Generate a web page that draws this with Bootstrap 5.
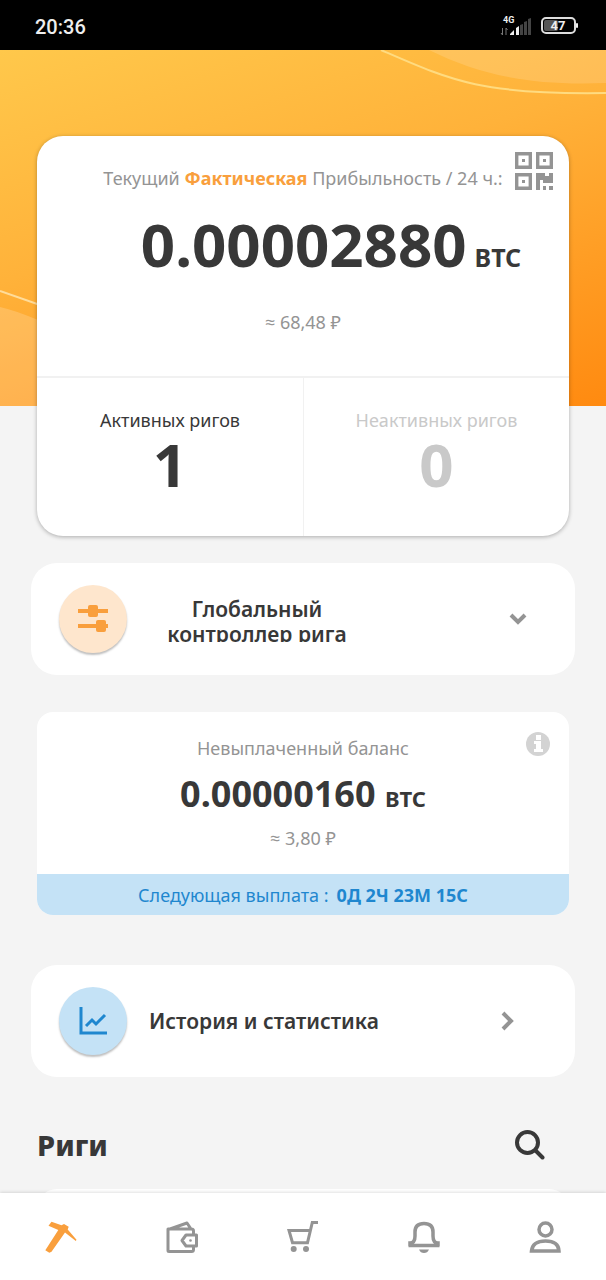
<!DOCTYPE html>
<html lang="ru">
<head>
<meta charset="utf-8">
<meta name="viewport" content="width=device-width, initial-scale=1">
<title>Риги</title>
<link href="https://cdn.jsdelivr.net/npm/bootstrap@5.3.0/dist/css/bootstrap.min.css" rel="stylesheet">
<style>
:root{--ink:#383838;--muted:#949494;--faint:#c9c9c9;--accent:#f99f3d;--blue:#1f87cf;--line:#f1f1f1}
body{font-family:"Noto Sans","Open Sans",sans-serif;background:#f4f4f4;color:var(--ink);font-size:18px;line-height:24px}
svg{display:block;flex:none}
.status{height:50px;background:#000;color:#eee;font:500 20px/24px Roboto,sans-serif;padding:4px 27px 0 35px}
.status svg text{font-family:Roboto,sans-serif;font-weight:700}
.hero{background:linear-gradient(162deg,#ffc84b 0%,#ffb23a 42%,#ff8a10 100%);padding:86px 37px 0}
.hero-art{inset:0}
.profit{border-radius:26px;margin-bottom:-130px;box-shadow:0 1px 4px rgba(0,0,0,.3)}
.profit-top{height:240px;padding-top:30px}
.qr{top:16px;right:16px}
.text-soft{color:var(--muted)}
.text-faint{color:var(--faint)}
.text-accent{color:var(--accent)}
.amount{font-size:60px;line-height:64px;margin-top:22px;padding-left:56px}
.unit{font-size:22px}
.amount .unit{font-size:25px;margin-left:8px}
.rate{margin-top:21px}
.rigs{border-top:2px solid var(--line)}
.rigs>div{height:158px;padding-top:30px}
.rigs>div+div{border-left:1px solid var(--line)}
.count{font-size:60px;line-height:64px;font-weight:700}
.rows{padding:157px 31px 0}
.row-card{width:100%;height:112px;border:0;border-radius:26px;background:#fff;padding:0 48px 0 28px;color:var(--ink);font-size:21px;line-height:25px;font-weight:600;text-decoration:none}
.disc{width:68px;height:68px;background:#c4e2f6;box-shadow:0 2px 2px rgba(0,0,0,.25)}
.disc-warm{background:#fee6cd}
.row-label{margin-left:22px}
.clip-label{width:216px;height:45px;overflow:hidden;text-align:center}
.gap-block{margin:37px 6px 50px}
.balance{border-radius:16px;overflow:hidden}
.balance-body{height:162px;padding-top:24px}
.balance-sum{font-size:36px;line-height:40px;margin-top:14px}
.info{top:20px;right:19px}
.payout{height:41px;background:#c4e2f6;color:var(--blue)}
.section-head{padding:0 30px 0 6px;margin-top:48px}
.section-head h1{font-size:29px;line-height:40px;font-weight:800}
.rig-list{border-radius:20px;margin:24px 6px -56px;min-height:60px}
.tabs{height:88px;background:#fff;box-shadow:0 -1px 3px rgba(0,0,0,.12);color:var(--muted)}
.tabs a{color:inherit}
.tabs a.active{color:var(--accent)}
</style>
</head>
<body class="d-flex flex-column min-vh-100">
<header class="status d-flex align-items-center justify-content-between">
  <span>20:36</span>
  <svg width="79" height="24" viewBox="0 0 79 24" fill="#eee" role="img" aria-label="4G, 47%">
    <text x="3" y="8" font-size="9">4G</text>
    <path d="M2.500 13v7M1 18l1.500 2M6 13v7M6 13l1.500 2" stroke="#777" fill="none"/>
    <path d="M10 20v-1l4-4v5zM16 20v-7l3-2v9z"/>
    <path d="M20 20v-10l3-1v11zM24 20V7l3-1v14zM28 20V4l3-1v17z" fill="#444"/>
    <rect x="42" y="3" width="33" height="15" rx="4" fill="none" stroke="#ddd" stroke-width="2"/>
    <rect x="44" y="5" width="14" height="11" rx="2" fill="#555"/>
    <rect x="76" y="8" width="2" height="5" rx="1"/>
    <text x="58" y="15" font-size="13" text-anchor="middle">47</text>
  </svg>
</header>

<main class="flex-grow-1 d-flex flex-column overflow-hidden">
  <section class="hero position-relative d-flex flex-column">
    <svg class="hero-art position-absolute w-100 h-100" viewBox="0 0 606 356" preserveAspectRatio="none" aria-hidden="true">
      <path d="M429 0C480 25 530 36 606 33V0z" fill="#fff" fill-opacity=".14"/>
      <path d="M381 0C450 30 480 45 606 43" fill="none" stroke="#ffdb80" stroke-width="2"/>
      <path d="M0 241L60 262" stroke="#ffdc9a" stroke-width="2"/>
      <path d="M0 257Q30 264 80 290V356H0z" fill="#fff" fill-opacity=".18"/>
    </svg>
    <div class="profit card border-0">
      <div class="profit-top text-center position-relative">
        <div class="text-soft">Текущий <b class="text-accent">Фактическая</b> Прибыльность / 24 ч.:</div>
        <div class="amount fw-bold">0.00002880<span class="unit">BTC</span></div>
        <div class="rate text-soft">≈ 68,48 ₽</div>
        <a class="qr position-absolute text-soft" href="#" aria-label="QR-код">
          <svg width="38" height="38" viewBox="0 0 38 38" fill="none" stroke="currentColor" stroke-width="3.400">
            <path d="M1.700 1.700h13.600v13.600H1.700zM22.700 1.700h13.600v13.600H22.700zM1.700 22.700h13.600v13.600H1.700z"/>
            <path stroke="none" fill="currentColor" d="M7 7h3v3H7zM28 7h3v3h-3zM7 28h3v3H7zM21 21h9v3h4v-3h4v10H28v-3h-3v10h-4zM28 34h3v4h-3zM34 34h4v4h-4z"/>
          </svg>
        </a>
      </div>
      <div class="rigs row g-0 text-center">
        <div class="col-6"><div>Активных ригов</div><div class="count">1</div></div>
        <div class="col-6 text-faint"><div>Неактивных ригов</div><div class="count">0</div></div>
      </div>
    </div>
  </section>

  <section class="rows d-flex flex-column flex-grow-1">
    <button type="button" class="row-card d-flex align-items-center" aria-expanded="false">
      <span class="disc disc-warm rounded-circle d-flex align-items-center justify-content-center">
        <svg width="30" height="30" viewBox="0 0 30 30" fill="#f99f3d"><path d="M0 5h30v4H0zM0 20h30v4H0z"/><rect x="10" y="1" width="10" height="12" rx="2"/><rect x="18" y="16" width="10" height="12" rx="2"/></svg>
      </span>
      <span class="row-label clip-label">Глобальный контроллер рига</span>
      <svg class="ms-auto text-soft" width="18" height="12" viewBox="0 0 18 12" fill="none" stroke="currentColor" stroke-width="4"><path d="M2 2l7 7 7-7"/></svg>
    </button>

    <div class="gap-block balance card border-0">
      <div class="balance-body text-center position-relative">
        <div class="text-soft">Невыплаченный баланс</div>
        <div class="balance-sum fw-bold">0.00000160 <span class="unit">BTC</span></div>
        <div class="text-soft mt-2">≈ 3,80 ₽</div>
        <svg class="info position-absolute" width="24" height="24" viewBox="0 0 24 24" role="img" aria-label="Информация"><circle cx="12" cy="12" r="12" fill="#d3d3d3"/><path fill="#fff" d="M10 3h5v5h-5zM8 9h7v8h2v3H8v-3h2v-5H8z"/></svg>
      </div>
      <div class="payout d-flex align-items-center justify-content-center gap-2"><span>Следующая выплата :</span><b>0Д 2Ч 23М 15С</b></div>
    </div>

    <a href="#" class="row-card d-flex align-items-center">
      <span class="disc rounded-circle d-flex align-items-center justify-content-center">
        <svg width="28" height="28" viewBox="0 0 28 28" fill="none" stroke="#1f87cf" stroke-width="3"><path d="M2 0v26h26M7 19l6-6 4 4 9-9"/></svg>
      </span>
      <span class="row-label">История и статистика</span>
      <svg class="ms-auto me-2 text-soft" width="18" height="20" viewBox="0 0 18 20" fill="none" stroke="currentColor" stroke-width="4"><path d="M2 2l8 8-8 8"/></svg>
    </a>

    <div class="section-head d-flex align-items-center justify-content-between">
      <h1 class="m-0">Риги</h1>
      <button type="button" class="btn border-0 p-0" aria-label="Поиск"><svg width="30" height="30" viewBox="0 0 30 30" fill="none" stroke="#383838" stroke-width="4" stroke-linecap="round"><circle cx="12.500" cy="12.500" r="10.500"/><path d="M20.500 20.500l7 7"/></svg></button>
    </div>
    <div class="rig-list bg-white flex-grow-1"></div>
  </section>
</main>

<nav class="tabs sticky-bottom">
  <div class="row row-cols-5 g-0 h-100">
    <a href="#" class="col active d-flex align-items-center justify-content-center" aria-label="Майнинг" aria-current="page">
      <svg width="32" height="32" viewBox="0 0 32 32" fill="currentColor"><path d="M3.500 4.800L6.500.800 16.500 4.300l2.500-1.300 4.700 2.700-1 2.900L31.500 18.700l-.700 1.300L20 11.600 6.500 30.800 4.300 31.800.300 29.300 13.300 9z"/></svg>
    </a>
    <a href="#" class="col d-flex align-items-center justify-content-center" aria-label="Кошелёк">
      <svg width="32" height="32" viewBox="0 0 32 32" fill="none" stroke="currentColor" stroke-width="3" stroke-linejoin="round"><path d="M27.500 14V10q0-2-2-2H2v21.500q0 1 1 1H25.500q2 0 2-2V25M4 8L21 2l4 6M16 19.500l4-5.500H30.500v11H20z"/><circle cx="24.500" cy="19.500" r="1.300" fill="currentColor" stroke="none"/></svg>
    </a>
    <a href="#" class="col d-flex align-items-center justify-content-center" aria-label="Магазин">
      <svg width="32" height="32" viewBox="0 0 32 32" fill="none" stroke="currentColor" stroke-width="3"><path d="M31 1.500H25.300L20.500 21.700H5.500L2 9.500H23"/><g fill="currentColor" stroke="none"><circle cx="6.700" cy="28" r="3"/><circle cx="19" cy="28" r="3"/></g></svg>
    </a>
    <a href="#" class="col d-flex align-items-center justify-content-center" aria-label="Уведомления">
      <svg width="32" height="32" viewBox="0 0 32 32" fill="none" stroke="currentColor" stroke-width="3.500"><path d="M.500 24.500H31.500M2 25v-3q5 0 5-7v-4Q7 2.500 16 2.500t9 8.500v4q0 7 5 7v3"/><path d="M11 28.500H21Q19.500 32 16 32t-5-3.500z" fill="currentColor" stroke="none"/></svg>
    </a>
    <a href="#" class="col d-flex align-items-center justify-content-center" aria-label="Профиль">
      <svg width="32" height="32" viewBox="0 0 32 32" fill="none" stroke="currentColor" stroke-width="3.500"><circle cx="16.500" cy="8.500" r="6.500"/><path d="M2.500 30Q3.500 20 16.500 20t13.500 10z"/></svg>
    </a>
  </div>
</nav>
<script src="https://cdn.jsdelivr.net/npm/bootstrap@5.3.0/dist/js/bootstrap.bundle.min.js"></script>
</body>
</html>
